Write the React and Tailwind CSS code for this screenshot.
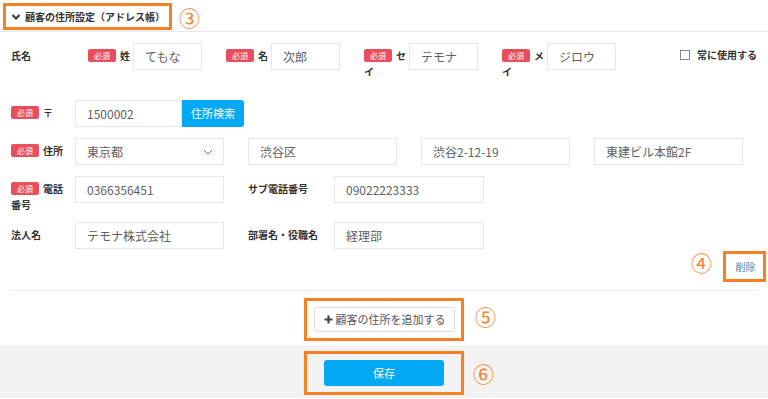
import React from 'react';

const font = "font-['Noto_Sans_CJK_JP',sans-serif]";

const Badge = () => (
    <span className="inline-block align-[1px] w-[28px] h-[13px] leading-[13px] mr-[4px] rounded-[2px] bg-[#e84e5c] text-white text-[8px] font-normal text-center">
        必須
    </span>
);

const Field = ({ value, width = 'w-[149px]' }) => (
    <div className={`${width} h-[27px] shrink-0 border border-[#e6e6e6] bg-white flex items-center pl-[11px] text-[12px] text-[#606060]`}>
        {value}
    </div>
);

const Mark = ({ n, className = '' }) => (
    <span className={`text-[21px] leading-[21px] text-[#f58025] ${className}`}>{n}</span>
);

const NameGroup = ({ label, value }) => (
    <div className="flex items-start">
        <div className="w-[45px] pt-[5px] leading-[16px] text-[10px] font-bold text-[#333]">
            <Badge />
            {label}
        </div>
        <Field value={value} width="w-[69px]" />
    </div>
);

const names = [
    { label: '姓', value: 'てもな' },
    { label: '名', value: '次郎' },
    { label: 'セイ', value: 'テモナ' },
    { label: 'メイ', value: 'ジロウ' },
];

const App = () => {
    return (
        <div className={`w-[768px] h-[399px] bg-white overflow-hidden ${font}`}>
            {/* header */}
            <div className="h-[32px] border-b border-[#e8e8e8] pl-[3px] pt-[3px] flex items-start">
                <div className="w-[169px] h-[27px] border-[3px] border-[#f58025] flex items-center pl-[5px] text-[10px] font-bold text-[#333]">
                    <svg width="10" height="10" viewBox="0 0 10 10" className="mr-[4px]">
                        <path d="M1.5 3 L5 6.5 L8.5 3" fill="none" stroke="#333" strokeWidth="2" />
                    </svg>
                    顧客の住所設定（アドレス帳）
                </div>
                <Mark n="③" className="ml-[7px] mt-[4px]" />
            </div>

            <div className="px-[11px]">
                {/* name row */}
                <div className="flex items-start mt-[11px]">
                    <div className="w-[77px] pt-[5px] leading-[16px] text-[10px] font-bold text-[#333]">氏名</div>
                    <div className="flex gap-[24px]">
                        {names.map(n => (
                            <NameGroup key={n.label} label={n.label} value={n.value} />
                        ))}
                    </div>
                    <div className="ml-auto flex items-center pt-[4px] text-[10px] font-bold text-[#333] leading-[15px]">
                        <span className="w-[10px] h-[10px] border border-[#888] mr-[7px]"></span>
                        常に使用する
                    </div>
                </div>

                {/* postal */}
                <div className="flex items-start mt-[20px]">
                    <div className="w-[64px] pt-[5px] leading-[16px] text-[10px] font-bold text-[#333]">
                        <Badge />〒
                    </div>
                    <Field value="1500002" width="w-[107px]" />
                    <div className="w-[62px] h-[27px] bg-[#03a9f4] rounded-r-[3px] flex items-center justify-center text-white text-[11px]">
                        住所検索
                    </div>
                </div>

                {/* address */}
                <div className="flex items-start mt-[11px]">
                    <div className="w-[64px] pt-[5px] leading-[16px] text-[10px] font-bold text-[#333]">
                        <Badge />住所
                    </div>
                    <div className="flex gap-[24px]">
                        <div className="w-[149px] h-[27px] border border-[#e6e6e6] flex items-center justify-between pl-[11px] pr-[10px] text-[12px] text-[#606060]">
                            東京都
                            <svg width="10" height="6" viewBox="0 0 10 6">
                                <path d="M1 1 L5 5 L9 1" fill="none" stroke="#777" strokeWidth="1" />
                            </svg>
                        </div>
                        <Field value="渋谷区" />
                        <Field value="渋谷2-12-19" />
                        <Field value="東建ビル本館2F" />
                    </div>
                </div>

                {/* phone */}
                <div className="flex items-start mt-[11px]">
                    <div className="w-[64px] pr-[6px] pt-[5px] leading-[16px] text-[10px] font-bold text-[#333]">
                        <Badge />電話番号
                    </div>
                    <Field value="0366356451" />
                    <div className="w-[86px] ml-[24px] pt-[5px] leading-[16px] text-[10px] font-bold text-[#333]">サブ電話番号</div>
                    <Field value="09022223333" width="w-[150px]" />
                </div>

                {/* company */}
                <div className="flex items-start mt-[9px]">
                    <div className="w-[64px] pt-[5px] leading-[16px] text-[10px] font-bold text-[#333]">法人名</div>
                    <Field value="テモナ株式会社" />
                    <div className="w-[86px] ml-[24px] pt-[5px] leading-[16px] text-[10px] font-bold text-[#333]">部署名・役職名</div>
                    <Field value="経理部" width="w-[150px]" />
                </div>

                {/* delete */}
                <div className="flex justify-end items-start mt-[2px] -mr-[9px]">
                    <Mark n="④" className="mt-[1px] mr-[11px]" />
                    <div className="w-[43px] h-[31px] border-[3px] border-[#f58025] flex items-center justify-center pl-[2px] text-[10px] text-[#5b7ea6]">
                        削除
                    </div>
                </div>

                <div className="mt-[8px] border-t border-[#ececec]"></div>
            </div>

            {/* add address */}
            <div className="grid grid-cols-[1fr_auto_1fr] items-start pt-[7px] pb-[4px]">
                <div></div>
                <div className="w-[160px] h-[43px] border-[3px] border-[#f58025] flex items-center pl-[7px]">
                    <div className="w-[141px] h-[25px] border border-[#dddddd] rounded-[3px] bg-white flex items-center justify-center text-[11px] text-[#555]">
                        <svg width="9" height="9" viewBox="0 0 9 9" className="mr-[3px]">
                            <path d="M4.5 0.5 V8.5 M0.5 4.5 H8.5" stroke="#444" strokeWidth="2.2" />
                        </svg>
                        顧客の住所を追加する
                    </div>
                </div>
                <Mark n="⑤" className="ml-[11px] mt-[8px]" />
            </div>

            {/* footer */}
            <div className="h-[53px] bg-[#f2f2f2] grid grid-cols-[1fr_auto_1fr] items-start pt-[6px]">
                <div></div>
                <div className="w-[160px] h-[44px] border-[3px] border-[#f58025] flex items-center justify-center">
                    <div className="w-[120px] h-[26px] bg-[#03a9f4] rounded-[3px] flex items-center justify-center text-white text-[11px]">
                        保存
                    </div>
                </div>
                <Mark n="⑥" className="ml-[9px] mt-[12px]" />
            </div>
        </div>
    );
};

export default App;
